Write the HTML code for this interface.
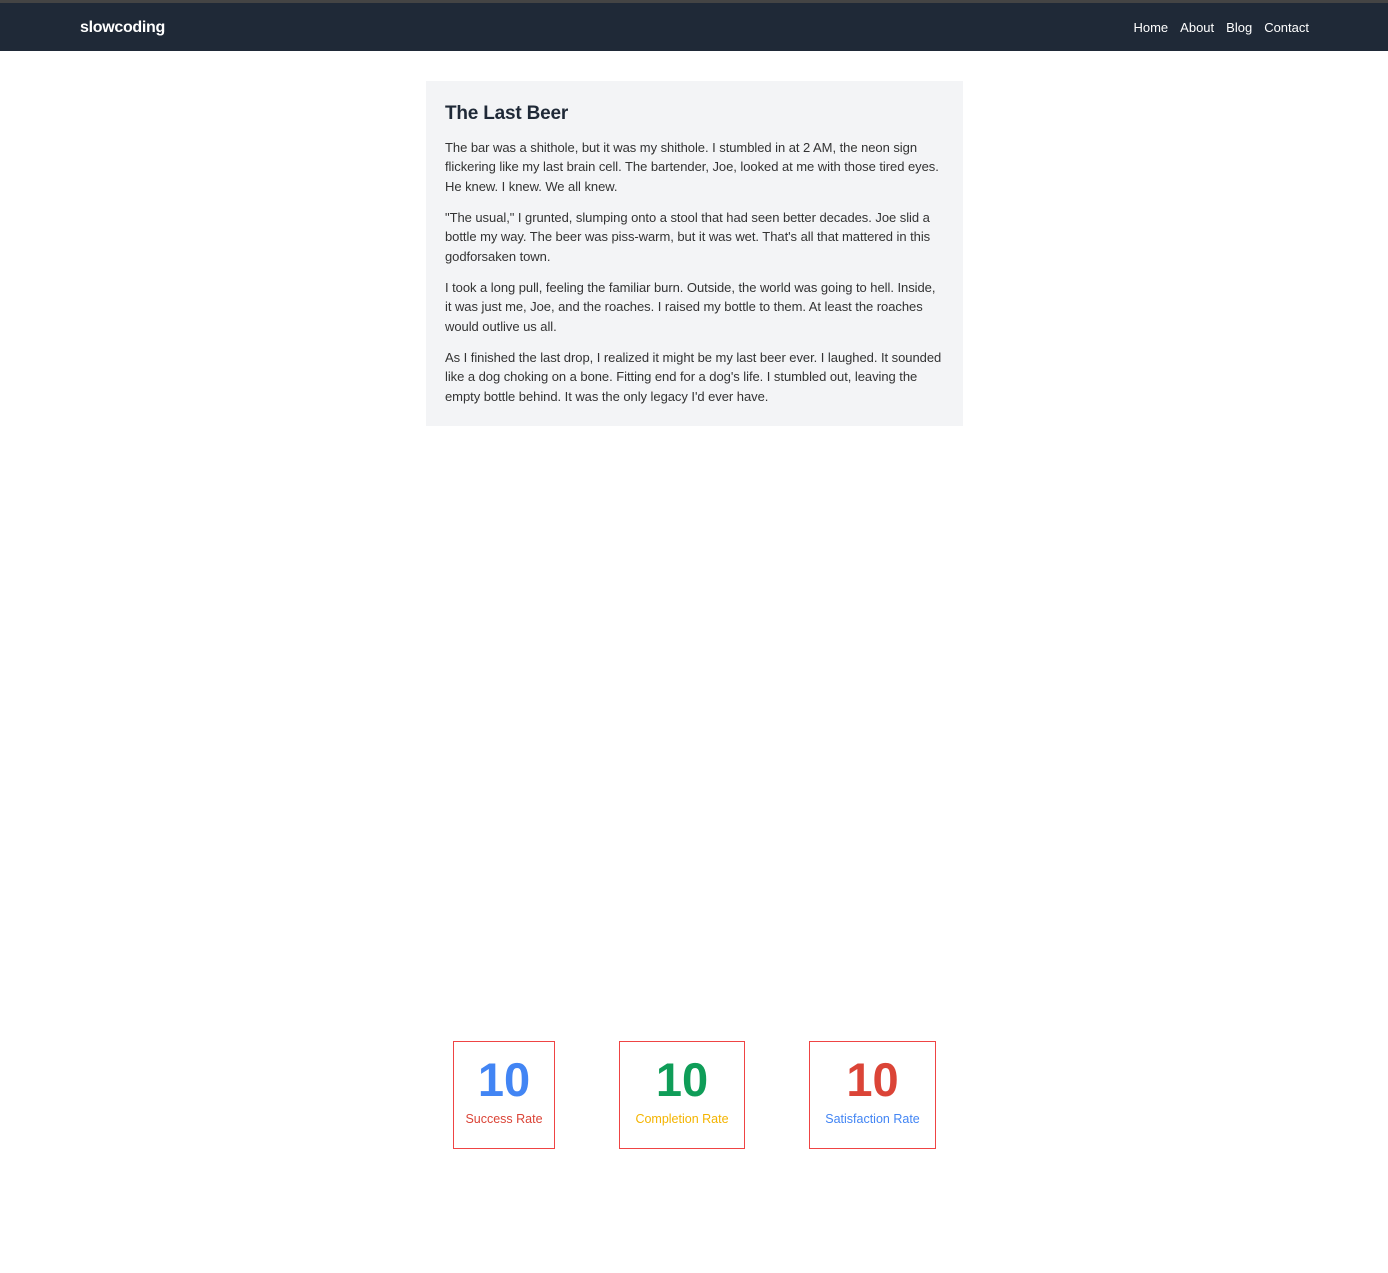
<!DOCTYPE html>
<html><head><meta charset="utf-8"><style>
html,body{margin:0;padding:0;background:#fff;}
body{font-family:"Liberation Sans",sans-serif;width:1388px;height:1273px;position:relative;overflow:hidden;}
.top{position:absolute;left:0;top:0;width:1388px;height:3px;background:#444;}
nav{position:absolute;left:0;top:3px;width:1388px;height:48px;background:#1f2937;color:#fff;}
.brand{position:absolute;left:80px;top:16px;font-size:16px;font-weight:bold;letter-spacing:-0.3px;}
.links{position:absolute;right:79px;top:17px;font-size:13px;}
.links span{margin-left:12px;}
.card{position:absolute;left:426px;top:81px;width:537px;height:345px;background:#f3f4f6;}
h1{position:absolute;left:19px;top:22px;margin:0;font-size:19px;color:#1f2937;letter-spacing:-0.2px;}
.p{position:absolute;left:19px;font-size:13px;line-height:19.3px;color:#333;white-space:nowrap;letter-spacing:-0.05px;}
.box{position:absolute;top:1041px;height:106px;border:1px solid #ef4444;text-align:center;}
.num{font-size:47px;font-weight:bold;margin-top:10px;line-height:56px;}
.lbl{font-size:12.5px;margin-top:4px;}
</style></head><body>
<div class="top"></div>
<nav><div class="brand">slowcoding</div><div class="links"><span>Home</span><span>About</span><span>Blog</span><span>Contact</span></div></nav>
<div class="card">
<h1>The Last Beer</h1>
<div class="p" style="top:57px">The bar was a shithole, but it was my shithole. I stumbled in at 2 AM, the neon sign<br>flickering like my last brain cell. The bartender, Joe, looked at me with those tired eyes.<br>He knew. I knew. We all knew.</div>
<div class="p" style="top:127px">"The usual," I grunted, slumping onto a stool that had seen better decades. Joe slid a<br>bottle my way. The beer was piss-warm, but it was wet. That's all that mattered in this<br>godforsaken town.</div>
<div class="p" style="top:197px">I took a long pull, feeling the familiar burn. Outside, the world was going to hell. Inside,<br>it was just me, Joe, and the roaches. I raised my bottle to them. At least the roaches<br>would outlive us all.</div>
<div class="p" style="top:267px">As I finished the last drop, I realized it might be my last beer ever. I laughed. It sounded<br>like a dog choking on a bone. Fitting end for a dog's life. I stumbled out, leaving the<br>empty bottle behind. It was the only legacy I'd ever have.</div>
</div>
<div class="box" style="left:453px;width:100px"><div class="num" style="color:#4285f4">10</div><div class="lbl" style="color:#db4437">Success Rate</div></div>
<div class="box" style="left:619px;width:124px"><div class="num" style="color:#0f9d58">10</div><div class="lbl" style="color:#f4b400">Completion Rate</div></div>
<div class="box" style="left:809px;width:125px"><div class="num" style="color:#db4437">10</div><div class="lbl" style="color:#4285f4">Satisfaction Rate</div></div>
</body></html>
